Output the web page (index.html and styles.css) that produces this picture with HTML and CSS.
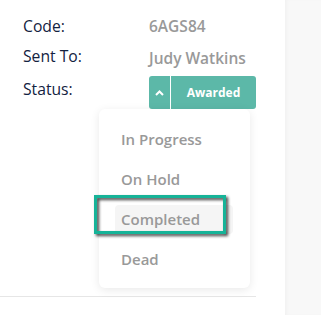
FILE: index.html
```html
<!DOCTYPE html>
<html>
<head>
<meta charset="utf-8">
<link rel="stylesheet" href="styles.css">
</head>
<body>
<div class="page">
  <main class="main">
    <div class="details">
      <div class="row">
        <div class="label">Code:</div>
        <div class="value">6AGS84</div>
      </div>
      <div class="row">
        <div class="label">Sent To:</div>
        <div class="value value-name">Judy Watkins</div>
      </div>
      <div class="row row-status">
        <div class="label label-status">Status:</div>
        <div class="status-wrap">
          <div class="status-btn">
            <span class="toggle">
              <svg width="9" height="6" viewBox="0 0 9 6"><path d="M1 5 L4.5 1.5 L8 5" fill="none" stroke="#fff" stroke-width="2"/></svg>
            </span>
            <span class="status-text">Awarded</span>
          </div>
          <ul class="menu">
            <li class="item">In Progress</li>
            <li class="item">On Hold</li>
            <li class="item item-active"><span class="hl">Completed</span></li>
            <li class="item">Dead</li>
            <div class="mark"></div>
          </ul>
        </div>
      </div>
    </div>
    <div class="divider"></div>
  </main>
  <aside class="side"></aside>
</div>
</body>
</html>
```
FILE: styles.css
```css
html, body {
  margin: 0;
  padding: 0;
  background: #fff;
}
body {
  font-family: "Open Sans", "Liberation Sans", sans-serif;
  font-size: 15px;
  line-height: 20px;
}
.page {
  display: flex;
  height: 315px;
}
.main {
  width: 285px;
  background: #fff;
  padding-top: 16px;
  box-sizing: border-box;
}
.side {
  flex: 1;
  background: #f8f8f8;
  box-shadow: inset 3px 0 4px -2px rgba(0,0,0,0.04);
}
.details {
  padding-left: 23px;
}
.row {
  display: flex;
  height: 30px;
}
.label {
  width: 126px;
  color: #13223f;
  font-size: 15.7px;
  font-weight: 500;
}
.value {
  color: #999;
  font-size: 15.5px;
  font-weight: 600;
}
.value-name {
  padding-top: 2px;
}
.row-status {
  height: 33px;
}
.label-status {
  padding-top: 3px;
}
.status-wrap {
  position: relative;
}
.status-btn {
  display: flex;
  width: 107px;
  height: 33px;
  background: #5cb8a8;
  border-radius: 3px;
  color: #fff;
}
.toggle {
  width: 21px;
  border-right: 1px solid #fff;
  display: flex;
  align-items: center;
  justify-content: center;
  padding-top: 1px;
}
.status-text {
  flex: 1;
  display: flex;
  align-items: center;
  justify-content: center;
  font-size: 12px;
  font-weight: 700;
}
.menu {
  position: absolute;
  left: -50px;
  top: 33px;
  width: 151px;
  margin: 0;
  padding: 10px 0 9px;
  list-style: none;
  background: #fff;
  border-radius: 6px;
  box-shadow: 0 2px 10px rgba(0,0,0,0.09);
  box-sizing: border-box;
}
.item {
  height: 40px;
  line-height: 40px;
  padding-left: 22px;
  color: #999;
  font-weight: 600;
}
.item-active {
  padding-left: 16px;
  padding-right: 17px;
  display: flex;
  align-items: center;
}
.hl {
  flex: 1;
  height: 29px;
  line-height: 29px;
  padding-left: 6px;
  background: #f5f5f5;
  border-radius: 4px;
}
.mark {
  position: absolute;
  left: -5px;
  top: 86px;
  width: 132px;
  height: 39px;
  border: 3px solid #16b398;
  box-sizing: border-box;
  filter: drop-shadow(2px 2px 1.5px rgba(0,0,0,0.75));
}
.divider {
  margin-top: 187px;
  width: 256px;
  height: 1px;
  background: #e6e6e6;
}
```
